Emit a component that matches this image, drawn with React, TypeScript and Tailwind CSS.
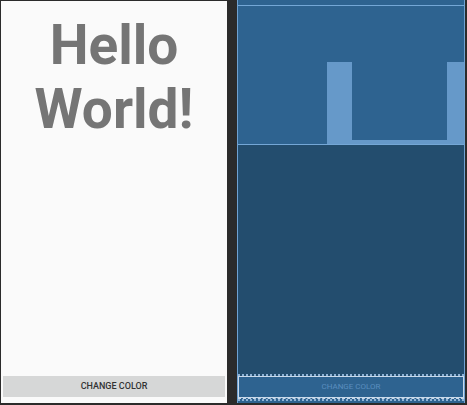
export default function App() {
  return (
    <div className="w-[467px] h-[405px] bg-[#2b2b2b] flex pt-px pl-px font-['Roboto',sans-serif]">
      {/* design view */}
      <div className="w-[226px] h-[402px] bg-[#fafafa] flex flex-col">
        <h1 className="pt-3 text-center text-[55px] leading-[64px] font-bold text-[#757575]">
          Hello
          <br />
          World!
        </h1>
        <div className="flex-1" />
        <button className="mx-[2px] mb-[6px] h-[21px] bg-[#d6d7d7] text-[9px] font-medium text-[#333333]">
          CHANGE COLOR
        </button>
      </div>

      {/* blueprint view */}
      <div className="ml-[10px] w-[228px] h-[403px] -mt-px flex flex-col border-x border-[#6fa2d2] bg-[#2e6390]">
        <div className="h-[5px]" />
        <div className="h-[140px] border-y border-[#74a7d6] flex items-end pl-[89px]">
          <div className="w-[25px] h-[82px] bg-[#6699c9]" />
          <div className="w-[95px] h-[4px] bg-[#6699c9]" />
          <div className="flex-1 h-[82px] bg-[#6699c9]" />
        </div>
        <div className="flex-1 bg-[#234d6e]" />
        <div className="h-[2px] bg-[repeating-linear-gradient(90deg,#8fb3d6_0_2px,#234d6e_2px_4px)]" />
        <div className="h-[22px] border border-[#c9d9ea] flex items-center justify-center text-[8px] text-[#5a8ebf]">
          CHANGE COLOR
        </div>
        <div className="border-t border-dashed border-[#c9d9ea]" />
        <div className="h-[2px] bg-[repeating-linear-gradient(90deg,#8fb3d6_0_2px,#2e6390_2px_4px)]" />
        <div className="h-[2px] bg-[#2e6390]" />
      </div>
    </div>
  );
}
